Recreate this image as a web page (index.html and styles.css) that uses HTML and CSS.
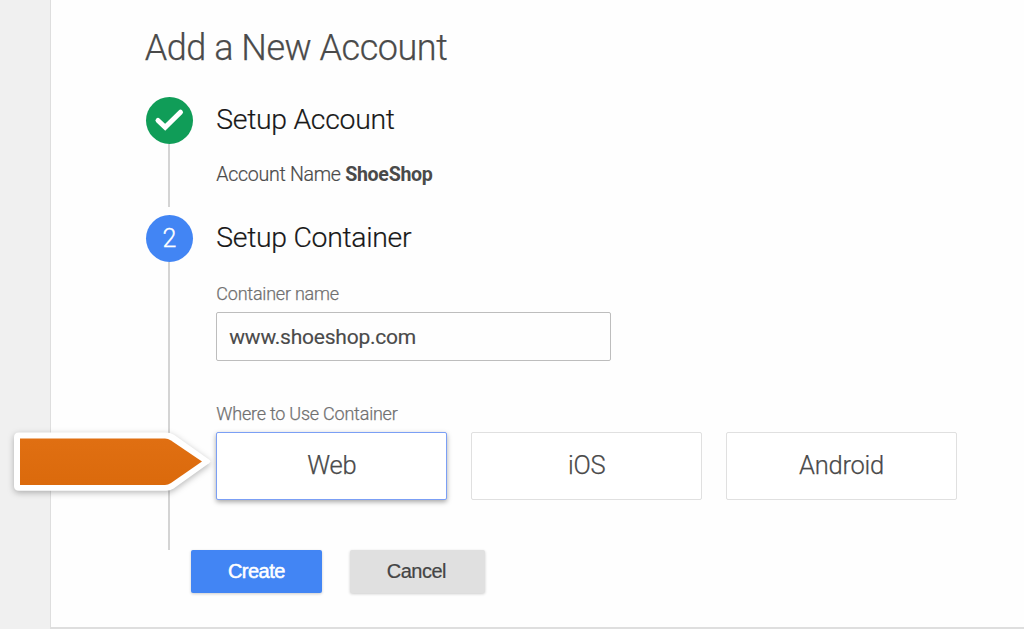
FILE: index.html
```html
<!DOCTYPE html>
<html lang="en">
<head>
<meta charset="utf-8">
<title>Add a New Account</title>
<link rel="stylesheet" href="styles.css">
</head>
<body>
<main class="panel">
  <h1 class="title">Add a New Account</h1>
  <section class="step step-done">
    <div class="rail">
      <div class="badge badge-green">
        <svg width="47" height="47" viewBox="0 0 47 47"><path d="M12 23.500 19.200 30.300 34.500 15.200" fill="none" stroke="#fff" stroke-width="5" stroke-linecap="round"/></svg>
      </div>
      <div class="line"></div>
    </div>
    <div class="content">
      <h2 class="heading">Setup Account</h2>
      <p class="summary">Account Name <b>ShoeShop</b></p>
    </div>
  </section>
  <section class="step step-current">
    <div class="rail">
      <div class="badge badge-blue">2</div>
      <div class="line"></div>
    </div>
    <div class="content">
      <h2 class="heading">Setup Container</h2>
      <div class="label label-name">Container name</div>
      <div class="field">www.shoeshop.com</div>
      <div class="label label-where">Where to Use Container</div>
      <div class="options">
        <div class="option selected">Web</div>
        <div class="option">iOS</div>
        <div class="option">Android</div>
      </div>
    </div>
  </section>
  <div class="actions">
    <button class="button create">Create</button>
    <button class="button cancel">Cancel</button>
  </div>
</main>
<svg class="pointer" width="224" height="80" viewBox="0 0 224 80">
  <defs>
    <linearGradient id="orange" x1="0" y1="0" x2="0" y2="1">
      <stop offset="0" stop-color="#e06f12"/>
      <stop offset="1" stop-color="#db6a0c"/>
    </linearGradient>
  </defs>
  <path d="M19 12.500H166Q170 12.500 174 14.800L209 39.500Q211.500 41.300 209 43.200L174 68.200Q170 70.700 166 70.700H19Q14 70.700 14 66V17.500Q14 12.500 19 12.500Z" fill="#fff"/>
  <path d="M20 18.500H165Q168 18.500 171 20.500L202 41.500 171 63Q168 65 165 65H20Z" fill="url(#orange)"/>
</svg>
</body>
</html>
```
FILE: styles.css
```css
* { box-sizing: border-box; }
body {
  margin: 0;
  height: 629px;
  overflow: hidden;
  background: #f0f0f0;
  font-family: Roboto, "Liberation Sans", sans-serif;
  color: #4a4a4a;
}
h1, h2, p { margin: 0; font-weight: 300; }
.panel {
  height: 629px;
  margin-left: 50px;
  padding: 26px 0 0 95px;
  border-left: 1px solid #dedede;
  border-bottom: 2px solid #dedede;
  background: #fefefe;
}
.title {
  height: 70.5px;
  margin-left: -1.3px;
  font-size: 36px;
  letter-spacing: -.46px;
  line-height: 44px;
  -webkit-text-stroke: .25px currentColor;
}
.step { display: flex; gap: 23.3px; }
.step-done { height: 118.5px; }
.step-current { height: 335px; }
.rail { display: flex; flex-direction: column; align-items: center; width: 47px; }
.badge { width: 47px; height: 47px; border-radius: 50%; }
.badge svg { display: block; }
.badge-green { background: #109d58; }
.badge-blue {
  background: #4285f4;
  color: #fff;
  font-size: 25px;
  font-weight: 300;
  line-height: 47px;
  text-align: center;
  -webkit-text-stroke: .3px currentColor;
}
.line { width: 2px; margin-right: 1px; flex: 1; background: #d4d4d4; }
.step-done .line { flex: none; height: 63px; }
.content { width: 742px; }
.heading {
  height: 62px;
  font-size: 28.4px;
  letter-spacing: -.3px;
  line-height: 46px;
  color: #181818;
  -webkit-text-stroke: .2px currentColor;
}
.summary {
  font-size: 19.6px;
  letter-spacing: -.3px;
  line-height: 32px;
  -webkit-text-stroke: .2px currentColor;
}
.summary b { font-weight: 700; -webkit-text-stroke: 0; }
.label {
  font-size: 18px;
  letter-spacing: -.22px;
  line-height: 24px;
  color: #707070;
  font-weight: 300;
  -webkit-text-stroke: .25px currentColor;
}
.label-name { margin-top: 5px; height: 30px; }
.field {
  width: 395px;
  height: 49px;
  padding: 0 12px;
  border: 1px solid #bdbdbd;
  border-radius: 2px;
  font-size: 21px;
  letter-spacing: -.22px;
  line-height: 48px;
  -webkit-text-stroke: .15px currentColor;
}
.label-where { margin-top: 41px; height: 30px; }
.options { display: flex; gap: 23.9px; }
.option {
  width: 231px;
  height: 68px;
  border: 1px solid #e0e0e0;
  border-radius: 2px;
  font-size: 25.5px;
  letter-spacing: -.25px;
  font-weight: 300;
  line-height: 65px;
  text-align: center;
  background: #fff;
  -webkit-text-stroke: .25px currentColor;
}
.option.selected { border-color: #7b9ff5; box-shadow: 0 2px 5px rgba(0, 0, 0, .35); }
.actions { display: flex; gap: 27.5px; margin-left: 45.4px; }
.button {
  height: 43px;
  padding: 0 1px 0 0;
  border: 0;
  border-radius: 2px;
  font: 20px/43px "Liberation Sans", sans-serif;
  letter-spacing: -.5px;
  box-shadow: 0 1px 3px rgba(0, 0, 0, .2);
}
.create { width: 131px; background: #4285f4; color: #fff; -webkit-text-stroke: .5px #fff; }
.cancel { width: 135px; padding-right: 2px; background: #e0e0e0; color: #444; -webkit-text-stroke: .2px #444; }
.pointer {
  position: absolute;
  left: 0;
  top: 420px;
  filter: drop-shadow(0 2px 3px rgba(0, 0, 0, .28));
}
```
